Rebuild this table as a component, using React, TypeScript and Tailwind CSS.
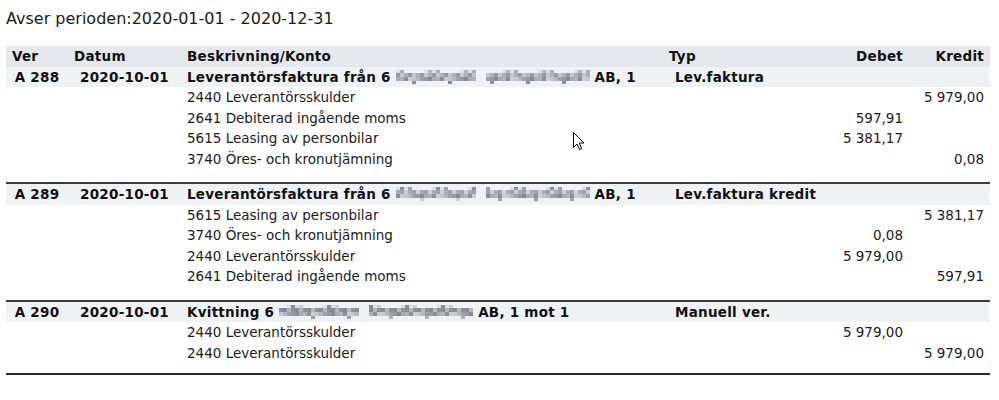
import React from "react";

type Line = { text: string; debet?: string; kredit?: string };
type Group = {
  ver: string;
  date: string;
  pre: string;
  blur: [number, number];
  post: string;
  typ: string;
  lines: Line[];
};

const shades = ["#b3b7bf", "#959aa4", "#a8acb5", "#8b909a", "#c3c6cc", "#9da1ab", "#858a94", "#aeb2ba", "#cbced3"];

function BlurWord({ width, seed }: { width: number; seed: number }) {
  const cols = Math.round(width / 4);
  const cells: React.ReactNode[] = [];
  for (let i = 0; i < cols; i++) {
    const r = (i * 7 + seed * 13) % 9;
    const top = r === 2 || r === 6 ? shades[(i + seed) % shades.length] : r === 4 || r === 8 ? "#dcdfe3" : "transparent";
    const bottom = r === 5 ? shades[(i + 2) % shades.length] : "transparent";
    cells.push(
      <div key={i} className="flex flex-col w-[4px]">
        <div className="h-[3px]" style={{ background: top }} />
        <div className="h-[4px]" style={{ background: shades[(i * 3 + seed) % shades.length] }} />
        <div className="h-[4px]" style={{ background: shades[(i * 5 + seed + 1) % shades.length] }} />
        <div className="h-[3px]" style={{ background: bottom }} />
      </div>
    );
  }
  return <span className="inline-flex align-middle">{cells}</span>;
}

const groups: Group[] = [
  {
    ver: "A 288",
    date: "2020-10-01",
    pre: "Leverantörsfaktura från 6",
    blur: [80, 104],
    post: "AB, 1",
    typ: "Lev.faktura",
    lines: [
      { text: "2440 Leverantörsskulder", kredit: "5 979,00" },
      { text: "2641 Debiterad ingående moms", debet: "597,91" },
      { text: "5615 Leasing av personbilar", debet: "5 381,17" },
      { text: "3740 Öres- och kronutjämning", kredit: "0,08" },
    ],
  },
  {
    ver: "A 289",
    date: "2020-10-01",
    pre: "Leverantörsfaktura från 6",
    blur: [80, 104],
    post: "AB, 1",
    typ: "Lev.faktura kredit",
    lines: [
      { text: "5615 Leasing av personbilar", kredit: "5 381,17" },
      { text: "3740 Öres- och kronutjämning", debet: "0,08" },
      { text: "2440 Leverantörsskulder", debet: "5 979,00" },
      { text: "2641 Debiterad ingående moms", kredit: "597,91" },
    ],
  },
  {
    ver: "A 290",
    date: "2020-10-01",
    pre: "Kvittning 6",
    blur: [80, 104],
    post: "AB, 1 mot 1",
    typ: "Manuell ver.",
    lines: [
      { text: "2440 Leverantörsskulder", debet: "5 979,00" },
      { text: "2440 Leverantörsskulder", kredit: "5 979,00" },
    ],
  },
];

const cols = "grid grid-cols-[62px_113px_482px_160px_86px_81px] items-center h-[20.5px]";

export default function App() {
  return (
    <div
      className="relative w-[999px] h-[400px] bg-white text-[#111] overflow-hidden"
      style={{ fontFamily: '"DejaVu Sans", Verdana, sans-serif' }}
    >
      <div className="pl-[6px] pt-[9px] text-[16px] leading-[20px] text-[#1a1a1a]">
        Avser perioden:2020-01-01 - 2020-12-31
      </div>
      <div className="mx-[6px] mt-[17px] w-[984px] text-[13.5px]">
        <div className={`${cols} bg-[#e4e8ec] font-bold tracking-[0.25px]`}>
          <div className="pl-[6px]">Ver</div>
          <div className="pl-[6px]">Datum</div>
          <div className="pl-[6px]">Beskrivning/Konto</div>
          <div className="pl-[6px]">Typ</div>
          <div className="text-right pr-[6px]">Debet</div>
          <div className="text-right pr-[6px]">Kredit</div>
        </div>
        {groups.map((g, gi) => (
          <div key={gi} className={gi > 0 ? "mt-[13px] border-t-2 border-[#3c3c3c]" : ""}>
            <div className={`${cols} bg-[#eff2f5] font-bold tracking-[0.25px]`}>
              <div className="text-center">{g.ver}</div>
              <div className="text-center">{g.date}</div>
              <div className="pl-[6px] whitespace-nowrap flex items-center">
                <span>{g.pre}</span>
                <span className="ml-[5px] flex"><BlurWord width={g.blur[0]} seed={gi + 1} /></span>
                <span className="ml-[10px] flex"><BlurWord width={g.blur[1]} seed={gi + 4} /></span>
                <span className="ml-[5px]">{g.post}</span>
              </div>
              <div className="pl-[12px] whitespace-nowrap">{g.typ}</div>
              <div />
              <div />
            </div>
            {g.lines.map((l, li) => (
              <div key={li} className={`${cols} text-[#1a1a1a]`}>
                <div />
                <div />
                <div className="pl-[6px] whitespace-nowrap">{l.text}</div>
                <div />
                <div className="text-right pr-[6px] whitespace-nowrap">{l.debet ?? ""}</div>
                <div className="text-right pr-[6px] whitespace-nowrap">{l.kredit ?? ""}</div>
              </div>
            ))}
          </div>
        ))}
        <div className="mt-[10px] border-t-2 border-[#2a2a2a]" />
      </div>
      <svg
        className="absolute left-[573px] top-[132px]"
        width="13"
        height="19"
        viewBox="0 0 13 19"
      >
        <path
          d="M0.5 0.5 L0.5 15.5 L4 12 L6.5 17.5 L8.7 16.5 L6.3 11 L11 11 Z"
          fill="#fff"
          stroke="#000"
          strokeWidth="1"
          strokeLinejoin="miter"
        />
      </svg>
    </div>
  );
}
